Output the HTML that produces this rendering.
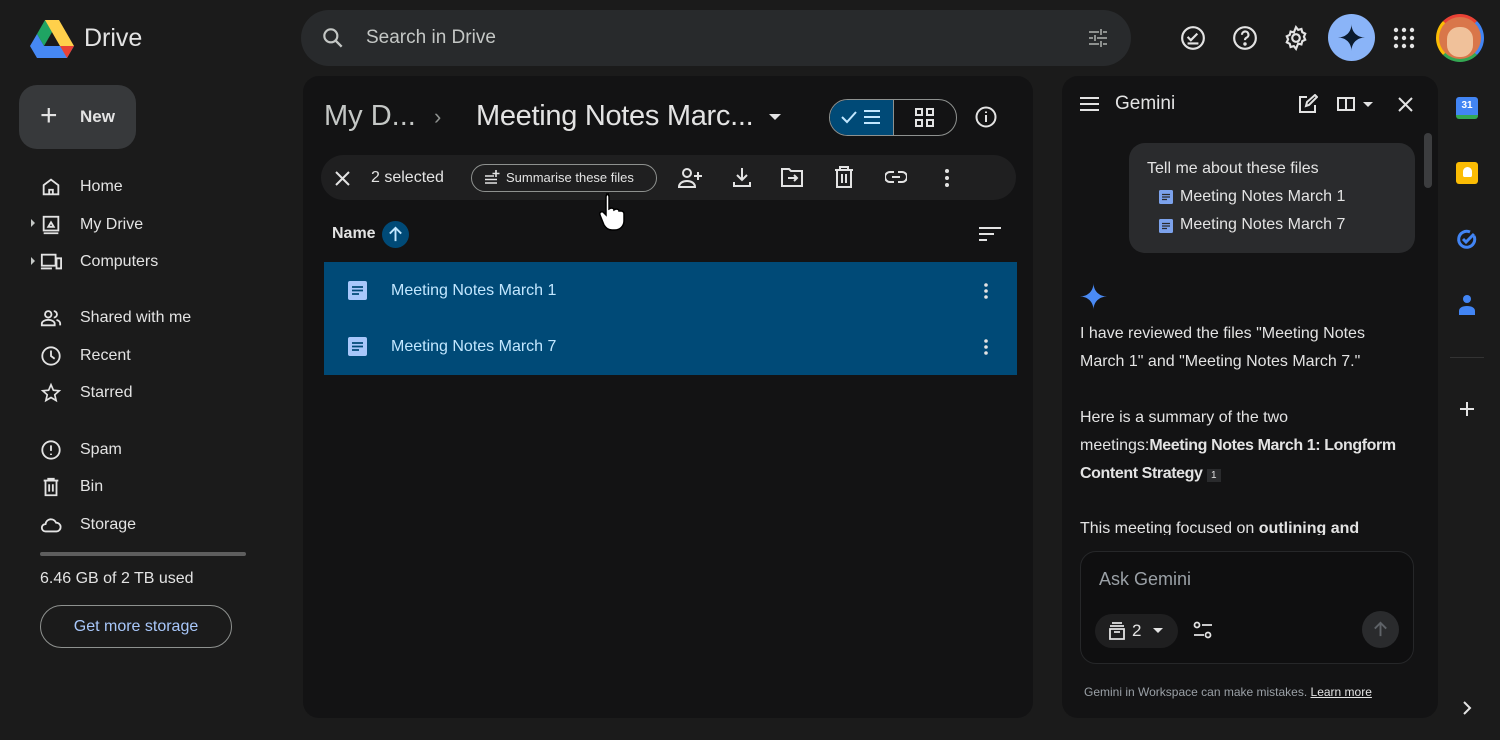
<!DOCTYPE html>
<html><head><style>
*{box-sizing:border-box;margin:0;padding:0}
body{width:1500px;height:740px;background:#1b1b1b;font-family:"Liberation Sans",sans-serif;color:#e3e3e3;position:relative;overflow:hidden}
.a{position:absolute}
svg{display:block}
.nav{position:absolute;left:38px;display:flex;align-items:center;font-size:16px;color:#e3e3e3}
.nav svg{margin-right:16px}
</style></head><body>
<svg class="a" style="left:30px;top:20px" width="44" height="38" viewBox="0 0 44 38">
<polygon points="15,0 29,0 14,26 7,14" fill="#1fa463"/>
<polygon points="29,0 44,26 30,26 15,0" fill="#ffd04b"/>
<polygon points="7,14 14,26 44,26 37,38 7,38 0,26" fill="#4688f4"/>
<polygon points="44,26 37,38 30,26" fill="#e94235"/>
</svg>
<div class="a" style="left:84px;top:24px;font-size:25px;color:#e3e3e3">Drive</div>
<div class="a" style="left:301px;top:10px;width:830px;height:56px;border-radius:28px;background:#282a2c"></div>
<svg class="a" style="left:320px;top:25px" width="26" height="26" viewBox="0 0 24 24"><circle cx="10" cy="10" r="6" stroke="#c4c7c5" stroke-width="2" fill="none"/><path d="M14.5 14.5L20 20" stroke="#c4c7c5" stroke-width="2.2"/></svg>
<div class="a" style="left:366px;top:27px;font-size:19px;color:#c4c7c5">Search in Drive</div>
<svg class="a" style="left:1086px;top:26px" width="24" height="24" viewBox="0 0 24 24" stroke="#8e918f" stroke-width="2"><path d="M3 6h10M17 6h4M3 12h4M11 12h10M3 18h10M17 18h4M15 3v6M9 9v6M15 15v6"/></svg>
<svg class="a" style="left:1180px;top:25px" width="26" height="26" viewBox="0 0 24 24" fill="none" stroke="#e3e3e3" stroke-width="2"><circle cx="12" cy="12" r="10"/><path d="M7 11l3 3 6-6M7 17h10"/></svg>
<svg class="a" style="left:1232px;top:25px" width="26" height="26" viewBox="0 0 24 24" fill="none" stroke="#e3e3e3" stroke-width="2"><circle cx="12" cy="12" r="10"/><path d="M9.2 9a3 3 0 1 1 4 2.8c-1 .5-1.2 1-1.2 2.2"/><circle cx="12" cy="17.5" r=".6" fill="#e3e3e3"/></svg>
<svg class="a" style="left:1283px;top:25px" width="26" height="26" viewBox="0 0 24 24" fill="none" stroke="#e3e3e3" stroke-width="2"><circle cx="12" cy="12" r="3.5"/><path d="M12 2l2 2.5 3-.8 .8 3 2.7 1.3-1.2 2.8 1.2 2.8-2.7 1.3-.8 3-3-.8L12 22l-2-2.5-3 .8-.8-3L3.5 16l1.2-2.8L3.5 10.4l2.7-1.3.8-3 3 .8z"/></svg>
<div class="a" style="left:1328px;top:14px;width:47px;height:47px;border-radius:50%;background:#8ab4f8"></div>
<svg class="a" style="left:1338px;top:24px" width="27" height="27" viewBox="0 0 24 24"><path d="M12 0C12 7 17 12 24 12C17 12 12 17 12 24C12 17 7 12 0 12C7 12 12 7 12 0Z" fill="#0b1b2e"/></svg>
<svg class="a" style="left:1393px;top:27px" width="22" height="22" viewBox="0 0 22 22" fill="#e3e3e3"><circle cx="3" cy="3" r="2.2"/><circle cx="11" cy="3" r="2.2"/><circle cx="19" cy="3" r="2.2"/><circle cx="3" cy="11" r="2.2"/><circle cx="11" cy="11" r="2.2"/><circle cx="19" cy="11" r="2.2"/><circle cx="3" cy="19" r="2.2"/><circle cx="11" cy="19" r="2.2"/><circle cx="19" cy="19" r="2.2"/></svg>
<div class="a" style="left:1436px;top:14px;width:48px;height:48px;border-radius:50%;border:3px solid;border-color:#e94235 #4285f4 #34a853 #fbbc04;background:#d9764a"><div style="margin:10px auto 0;width:26px;height:30px;border-radius:12px;background:#f0c19a"></div></div>
<div class="a" style="left:19px;top:85px;width:117px;height:64px;border-radius:18px;background:#37393b"></div>
<div class="a" style="left:40px;top:101px;font-size:30px;font-weight:300;line-height:30px">+</div>
<div class="a" style="left:80px;top:107px;font-size:17px;font-weight:bold">New</div>
<div class="nav" style="top:176px"><svg width="26" height="22" viewBox="0 0 24 24" fill="none" stroke="#e3e3e3" stroke-width="2"><path d="M4 10l8-6 8 6v10H4zM10 20v-5h4v5"/></svg>Home</div>
<div class="nav" style="top:214px"><svg width="26" height="22" viewBox="0 0 24 24" fill="none" stroke="#e3e3e3" stroke-width="2"><rect x="4" y="3" width="16" height="15"/><path d="M4 21h16M9 14l3-5 3 5z"/></svg>My Drive</div>
<div class="nav" style="top:251px"><svg width="26" height="22" viewBox="0 0 24 24" fill="none" stroke="#e3e3e3" stroke-width="2"><rect x="2" y="4" width="15" height="12"/><path d="M1 19h12M18 8h5v11h-5z"/></svg>Computers</div>
<div class="a" style="left:31px;top:219px;border-left:4px solid #c4c7c5;border-top:4px solid transparent;border-bottom:4px solid transparent"></div>
<div class="a" style="left:31px;top:257px;border-left:4px solid #c4c7c5;border-top:4px solid transparent;border-bottom:4px solid transparent"></div>
<div class="nav" style="top:307px"><svg width="26" height="22" viewBox="0 0 24 24" fill="none" stroke="#e3e3e3" stroke-width="2"><circle cx="9" cy="8" r="3.5"/><path d="M2 20v-2c0-2 3-4 7-4s7 2 7 4v2zM15 4.5a3.5 3.5 0 0 1 0 7M18 14c2 .5 4 2 4 4v2"/></svg>Shared with me</div>
<div class="nav" style="top:345px"><svg width="26" height="22" viewBox="0 0 24 24" fill="none" stroke="#e3e3e3" stroke-width="2"><circle cx="12" cy="12" r="9.5"/><path d="M12 6v6l4 3"/></svg>Recent</div>
<div class="nav" style="top:382px"><svg width="26" height="22" viewBox="0 0 24 24" fill="none" stroke="#e3e3e3" stroke-width="1.8"><path d="M12 3l2.6 6 6.4.6-4.9 4.3 1.5 6.3L12 16.9 6.4 20.2l1.5-6.3L3 9.6l6.4-.6z"/></svg>Starred</div>
<div class="nav" style="top:439px"><svg width="26" height="22" viewBox="0 0 24 24" fill="none" stroke="#e3e3e3" stroke-width="2"><circle cx="12" cy="12" r="9.5"/><path d="M12 7v6M12 16v1.5"/></svg>Spam</div>
<div class="nav" style="top:476px"><svg width="26" height="22" viewBox="0 0 24 24" fill="none" stroke="#e3e3e3" stroke-width="2"><path d="M4 5h16M9 5V3h6v2M6 5v16h12V5M10 9v8M14 9v8"/></svg>Bin</div>
<div class="nav" style="top:514px"><svg width="26" height="22" viewBox="0 0 24 24" fill="none" stroke="#e3e3e3" stroke-width="2"><path d="M6 19a4 4 0 0 1 0-8 6 6 0 0 1 11.5-1.5A4.5 4.5 0 0 1 18 19z"/></svg>Storage</div>
<div class="a" style="left:40px;top:552px;width:206px;height:4px;border-radius:2px;background:#5e5e5e"></div>
<div class="a" style="left:40px;top:570px;font-size:16px;color:#e3e3e3">6.46 GB of 2 TB used</div>
<div class="a" style="left:40px;top:605px;width:192px;height:43px;border-radius:22px;border:1px solid #8e918f;color:#a8c7fa;font-size:16px;text-align:center;line-height:41px">Get more storage</div>
<div class="a" style="left:303px;top:76px;width:730px;height:642px;border-radius:16px;background:#131314"></div>
<div class="a" style="left:324px;top:100px;font-size:29px;color:#c4c7c5">My D...</div>
<div class="a" style="left:434px;top:104px;font-size:22px;color:#8e918f">›</div>
<div class="a" style="left:476px;top:100px;font-size:29px;color:#e3e3e3;letter-spacing:-0.3px">Meeting Notes Marc...</div>
<div class="a" style="left:769px;top:114px;border-top:6px solid #e3e3e3;border-left:6px solid transparent;border-right:6px solid transparent"></div>
<div class="a" style="left:829px;top:99px;width:128px;height:37px;border-radius:19px;border:1px solid #8e918f;overflow:hidden"><div style="width:64px;height:100%;background:#004a77;border-right:1px solid #8e918f"></div></div>
<svg class="a" style="left:840px;top:107px" width="44" height="20" viewBox="0 0 44 20" fill="none" stroke="#c2e7ff" stroke-width="2"><path d="M2 10l5 5 9-10M24 4h16M24 10h16M24 16h16"/></svg>
<svg class="a" style="left:915px;top:108px" width="19" height="19" viewBox="0 0 19 19" fill="none" stroke="#e3e3e3" stroke-width="2"><rect x="1" y="1" width="6" height="6"/><rect x="12" y="1" width="6" height="6"/><rect x="1" y="12" width="6" height="6"/><rect x="12" y="12" width="6" height="6"/></svg>
<svg class="a" style="left:975px;top:106px" width="22" height="22" viewBox="0 0 22 22" fill="none" stroke="#e3e3e3" stroke-width="2"><circle cx="11" cy="11" r="9.5"/><path d="M11 9v7M11 5.5v1.5"/></svg>
<div class="a" style="left:321px;top:155px;width:695px;height:45px;border-radius:23px;background:#1f1f20"></div>
<svg class="a" style="left:334px;top:170px" width="17" height="17" viewBox="0 0 17 17" stroke="#e3e3e3" stroke-width="2"><path d="M2 2l13 13M15 2L2 15"/></svg>
<div class="a" style="left:371px;top:169px;font-size:16px">2 selected</div>
<div class="a" style="left:471px;top:164px;width:186px;height:28px;border-radius:14px;border:1px solid #8e918f"></div>
<svg class="a" style="left:484px;top:170px" width="16" height="15" viewBox="0 0 16 15" stroke="#e3e3e3" stroke-width="1.6"><path d="M1 6h9M1 9.5h12M1 13h12M12 0v7M8.5 3.5h7"/></svg>
<div class="a" style="left:506px;top:170px;font-size:13px">Summarise these files</div>
<svg class="a" style="left:678px;top:167px" width="24" height="22" viewBox="0 0 24 22" fill="none" stroke="#e3e3e3" stroke-width="2"><circle cx="9" cy="6" r="4"/><path d="M1 20c0-4 4-6 8-6s8 2 8 6zM20 5v8M16 9h8"/></svg>
<svg class="a" style="left:731px;top:166px" width="22" height="22" viewBox="0 0 22 22" fill="none" stroke="#e3e3e3" stroke-width="2"><path d="M11 2v12M6 9l5 5 5-5M3 16v4h16v-4"/></svg>
<svg class="a" style="left:781px;top:167px" width="22" height="20" viewBox="0 0 22 20" fill="none" stroke="#e3e3e3" stroke-width="2"><path d="M1 2h7l2 2h11v15H1zM7 11h9M13 8l3 3-3 3"/></svg>
<svg class="a" style="left:834px;top:166px" width="20" height="22" viewBox="0 0 20 22" fill="none" stroke="#e3e3e3" stroke-width="2"><path d="M1 4h18M6 4V1h8v3M3 4v17h14V4M8 8v9M12 8v9"/></svg>
<svg class="a" style="left:885px;top:170px" width="22" height="14" viewBox="0 0 22 14" fill="none" stroke="#e3e3e3" stroke-width="2"><path d="M9 2H5a5 5 0 0 0 0 10h4M13 2h4a5 5 0 0 1 0 10h-4M7 7h8"/></svg>
<svg class="a" style="left:944px;top:168px" width="6" height="20" viewBox="0 0 6 20" fill="#e3e3e3"><circle cx="3" cy="3" r="2"/><circle cx="3" cy="10" r="2"/><circle cx="3" cy="17" r="2"/></svg>
<svg class="a" style="left:597px;top:192px" width="34" height="40" viewBox="0 0 34 40"><path d="M9 2c2 0 3 1 3 3v12l2-1c2 0 3 1 3 2l2-1c2 0 3 1 3 2l2 0c2 0 3 1 3 3v7c0 5-4 9-9 9h-3c-4 0-6-2-8-5L3 23c-1-2 1-4 3-3l3 3V5c0-2 1-3 3-3z" fill="#fff" stroke="#000" stroke-width="1.5"/></svg>
<div class="a" style="left:332px;top:225px;font-size:16px;font-weight:bold">Name</div>
<div class="a" style="left:382px;top:221px;width:27px;height:27px;border-radius:50%;background:#004a77"></div>
<svg class="a" style="left:386px;top:225px" width="19" height="19" viewBox="0 0 20 20" fill="none" stroke="#c2e7ff" stroke-width="2"><path d="M10 17V3M4 9l6-6 6 6"/></svg>
<svg class="a" style="left:979px;top:226px" width="22" height="16" viewBox="0 0 22 16" stroke="#e3e3e3" stroke-width="2"><path d="M0 2h22M0 8h15M0 14h8"/></svg>
<div class="a" style="left:324px;top:262px;width:693px;height:113px;background:#004a77"></div>
<svg class="a" style="left:348px;top:281px" width="19" height="19" viewBox="0 0 19 19"><rect width="19" height="19" rx="2" fill="#a8c7fa"/><path d="M4 6h11M4 9.5h11M4 13h7" stroke="#004a77" stroke-width="1.8"/></svg>
<div class="a" style="left:391px;top:282px;font-size:16px;color:#c2e7ff">Meeting Notes March 1</div>
<svg class="a" style="left:983px;top:282px" width="6" height="18" viewBox="0 0 6 18" fill="#e3e3e3"><circle cx="3" cy="3" r="1.8"/><circle cx="3" cy="9" r="1.8"/><circle cx="3" cy="15" r="1.8"/></svg>
<svg class="a" style="left:348px;top:337px" width="19" height="19" viewBox="0 0 19 19"><rect width="19" height="19" rx="2" fill="#a8c7fa"/><path d="M4 6h11M4 9.5h11M4 13h7" stroke="#004a77" stroke-width="1.8"/></svg>
<div class="a" style="left:391px;top:338px;font-size:16px;color:#c2e7ff">Meeting Notes March 7</div>
<svg class="a" style="left:983px;top:338px" width="6" height="18" viewBox="0 0 6 18" fill="#e3e3e3"><circle cx="3" cy="3" r="1.8"/><circle cx="3" cy="9" r="1.8"/><circle cx="3" cy="15" r="1.8"/></svg>
<div class="a" style="left:1062px;top:76px;width:376px;height:642px;border-radius:16px;background:#131314"></div>
<svg class="a" style="left:1080px;top:97px" width="19" height="14" viewBox="0 0 19 14" stroke="#e3e3e3" stroke-width="2"><path d="M0 1h19M0 7h19M0 13h19"/></svg>
<div class="a" style="left:1115px;top:93px;font-size:19px">Gemini</div>
<svg class="a" style="left:1298px;top:94px" width="20" height="20" viewBox="0 0 20 20" fill="none" stroke="#e3e3e3" stroke-width="2"><path d="M9 3H2v15h15v-7M8 12l1-4 8-7 2 2-8 8z"/></svg>
<svg class="a" style="left:1337px;top:97px" width="18" height="14" viewBox="0 0 18 14" fill="none" stroke="#e3e3e3" stroke-width="2"><rect x="1" y="1" width="16" height="12"/><path d="M9 1v12"/></svg>
<div class="a" style="left:1363px;top:102px;border-top:5px solid #e3e3e3;border-left:5px solid transparent;border-right:5px solid transparent"></div>
<svg class="a" style="left:1398px;top:97px" width="15" height="15" viewBox="0 0 15 15" stroke="#e3e3e3" stroke-width="2"><path d="M1 1l13 13M14 1L1 14"/></svg>
<div class="a" style="left:1129px;top:143px;width:286px;height:110px;border-radius:16px;background:#2a2b2d"></div>
<div class="a" style="left:1147px;top:160px;font-size:16px">Tell me about these files</div>
<svg class="a" style="left:1159px;top:190px" width="14" height="14" viewBox="0 0 14 14"><rect width="14" height="14" rx="1.5" fill="#7ca2ec"/><path d="M3 4.5h8M3 7h8M3 9.5h5" stroke="#2a2b2d" stroke-width="1.3"/></svg>
<div class="a" style="left:1180px;top:188px;font-size:16px">Meeting Notes March 1</div>
<svg class="a" style="left:1159px;top:219px" width="14" height="14" viewBox="0 0 14 14"><rect width="14" height="14" rx="1.5" fill="#7ca2ec"/><path d="M3 4.5h8M3 7h8M3 9.5h5" stroke="#2a2b2d" stroke-width="1.3"/></svg>
<div class="a" style="left:1180px;top:216px;font-size:16px">Meeting Notes March 7</div>
<div class="a" style="left:1424px;top:133px;width:8px;height:55px;border-radius:4px;background:#3c3d3f"></div>
<svg class="a" style="left:1080px;top:283px" width="27" height="27" viewBox="0 0 24 24"><path d="M12 0C12 7 17 12 24 12C17 12 12 17 12 24C12 17 7 12 0 12C7 12 12 7 12 0Z" fill="#4a8af4"/></svg>
<div class="a" style="left:1080px;top:320px;white-space:nowrap;font-size:16px;line-height:28px;color:#e3e3e3">I have reviewed the files "Meeting Notes<br>March 1" and "Meeting Notes March 7."<br><br>Here is a summary of the two<br>meetings:<b style="letter-spacing:-0.4px">Meeting Notes March 1: Longform<br>Content Strategy</b> <span style="font-size:10px;background:#2a2b2d;padding:1px 4px">1</span></div>
<div class="a" style="left:1080px;top:519px;width:330px;height:16px;overflow:hidden;font-size:16px;line-height:20px">This meeting focused on <b>outlining and</b></div>
<div class="a" style="left:1080px;top:551px;width:334px;height:113px;border-radius:16px;background:#0f0f10;border:1px solid #262729"></div>
<div class="a" style="left:1099px;top:569px;font-size:18px;color:#9aa0a6">Ask Gemini</div>
<div class="a" style="left:1095px;top:614px;width:83px;height:34px;border-radius:17px;background:#1f1f20"></div>
<svg class="a" style="left:1108px;top:621px" width="18" height="19" viewBox="0 0 18 19" fill="none" stroke="#e3e3e3" stroke-width="1.8"><path d="M4 2h10M2 5h14M2 8h14v10H2zM6 11h6"/></svg>
<div class="a" style="left:1132px;top:621px;font-size:17px">2</div>
<div class="a" style="left:1153px;top:628px;border-top:5px solid #e3e3e3;border-left:5px solid transparent;border-right:5px solid transparent"></div>
<svg class="a" style="left:1193px;top:621px" width="20" height="18" viewBox="0 0 20 18" fill="none" stroke="#e3e3e3" stroke-width="1.8"><circle cx="4" cy="4" r="2.5"/><path d="M9 4h10M1 14h10"/><circle cx="15" cy="14" r="2.5"/></svg>
<div class="a" style="left:1362px;top:611px;width:37px;height:37px;border-radius:50%;background:#2a2b2d"></div>
<svg class="a" style="left:1371px;top:620px" width="19" height="19" viewBox="0 0 20 20" fill="none" stroke="#5f6368" stroke-width="2"><path d="M10 17V3M4 9l6-6 6 6"/></svg>
<div class="a" style="left:1084px;top:685px;font-size:12px;color:#9aa0a6">Gemini in Workspace can make mistakes. <span style="color:#e3e3e3;text-decoration:underline">Learn more</span></div>
<div class="a" style="left:1456px;top:97px;width:22px;height:22px;border-radius:3px;background:#4285f4;border-bottom:4px solid #34a853;font-size:10px;color:#fff;text-align:center;line-height:18px;font-weight:bold">31</div>
<div class="a" style="left:1456px;top:162px;width:22px;height:22px;border-radius:3px;background:#fbbc04"><div style="margin:5px auto;width:9px;height:10px;border-radius:5px 5px 2px 2px;background:#fff"></div></div>
<svg class="a" style="left:1456px;top:228px" width="22" height="22" viewBox="0 0 22 22" fill="none" stroke="#4285f4" stroke-width="3"><path d="M18 8a8 8 0 1 1-4-4"/><path d="M7 11l3 3 8-8"/></svg>
<svg class="a" style="left:1458px;top:294px" width="18" height="22" viewBox="0 0 18 22" fill="#4285f4"><circle cx="9" cy="5" r="4"/><path d="M1 21v-4c0-3 3-5 8-5s8 2 8 5v4z"/></svg>
<div class="a" style="left:1450px;top:357px;width:34px;height:1px;background:#333"></div>
<svg class="a" style="left:1459px;top:401px" width="16" height="16" viewBox="0 0 16 16" stroke="#e3e3e3" stroke-width="2"><path d="M8 1v14M1 8h14"/></svg>
<svg class="a" style="left:1462px;top:700px" width="10" height="16" viewBox="0 0 10 16" fill="none" stroke="#e3e3e3" stroke-width="2"><path d="M2 2l6 6-6 6"/></svg>
</body></html>
